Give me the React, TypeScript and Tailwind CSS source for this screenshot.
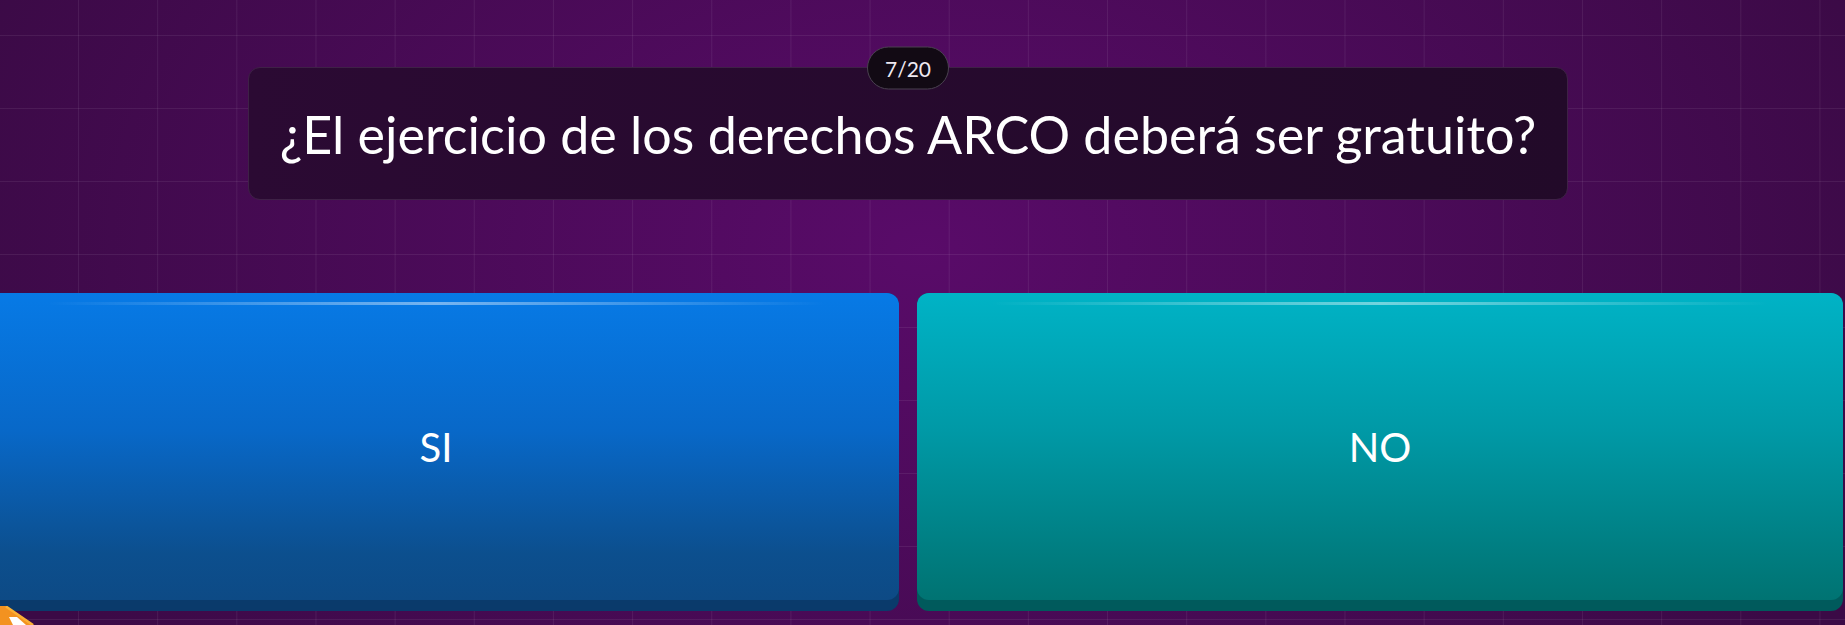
import React from 'react';

const answers = [
  {
    label: 'SI',
    edge: 'bg-[#0a3a6b]',
    face: 'bg-[linear-gradient(to_bottom,#077ae6_0%,#0868c8_45%,#0c4f8e_85%,#0d4a85_100%)]',
  },
  {
    label: 'NO',
    edge: 'bg-[#005a5c]',
    face: 'bg-[linear-gradient(to_bottom,#00b3c6_0%,#0099a6_45%,#007d80_85%,#007372_100%)]',
  },
];

function AnswerButton({ label, edge, face }: { label: string; edge: string; face: string }) {
  return (
    <button className={`h-[318px] rounded-xl pb-[11px] ${edge}`}>
      <div className={`relative flex h-full items-center justify-center rounded-xl ${face}`}>
        <div className="absolute left-[8%] right-[8%] top-[9px] h-[3px] bg-gradient-to-r from-transparent via-white/45 to-transparent" />
        <span className="text-[40px] leading-none text-white">{label}</span>
      </div>
    </button>
  );
}

function CornerMascot() {
  return (
    <svg className="absolute bottom-0 left-0" width="34" height="19" viewBox="0 0 34 19">
      <polygon points="0,0 6,0 34,19 0,19" fill="#f39220" />
      <line x1="6" y1="0.5" x2="33" y2="19" stroke="#fbb034" strokeWidth="2.5" />
      <polygon points="9,11 17,11 26,19 13,19" fill="#ffffff" />
    </svg>
  );
}

export default function App() {
  return (
    <main className="relative h-[625px] w-full overflow-hidden bg-[radial-gradient(ellipse_55%_110%_at_50%_40%,#590b69_0%,#3b0a46_100%)] font-[Lato,sans-serif]">
      <div className="pointer-events-none absolute inset-0 bg-[linear-gradient(to_right,rgba(255,255,255,0.07)_1px,transparent_1px),linear-gradient(to_bottom,rgba(255,255,255,0.07)_1px,transparent_1px)] bg-[length:79.16px_73px] bg-[position:-1.16px_-38px]" />

      <div className="relative ml-[-27px] flex w-[1870px] flex-col items-center pt-[67px]">
        <div className="relative flex h-[133px] w-[1320px] items-center justify-center rounded-xl border border-[#3e2146] bg-[linear-gradient(to_right,#2b0a33,#220a29)]">
          <div className="absolute left-1/2 top-0 flex h-[43px] w-[82px] -translate-x-1/2 -translate-y-1/2 items-center justify-center rounded-full border border-[#4a4150] bg-[#120a14] text-[21px] text-[#efe9f1]">
            7/20
          </div>
          <h1 className="text-[52px] leading-none text-white">¿El ejercicio de los derechos ARCO deberá ser gratuito?</h1>
        </div>

        <div className="mt-[93px] grid w-full grid-cols-2 gap-[18px]">
          {answers.map((a) => (
            <AnswerButton key={a.label} {...a} />
          ))}
        </div>
      </div>

      <CornerMascot />
    </main>
  );
}
